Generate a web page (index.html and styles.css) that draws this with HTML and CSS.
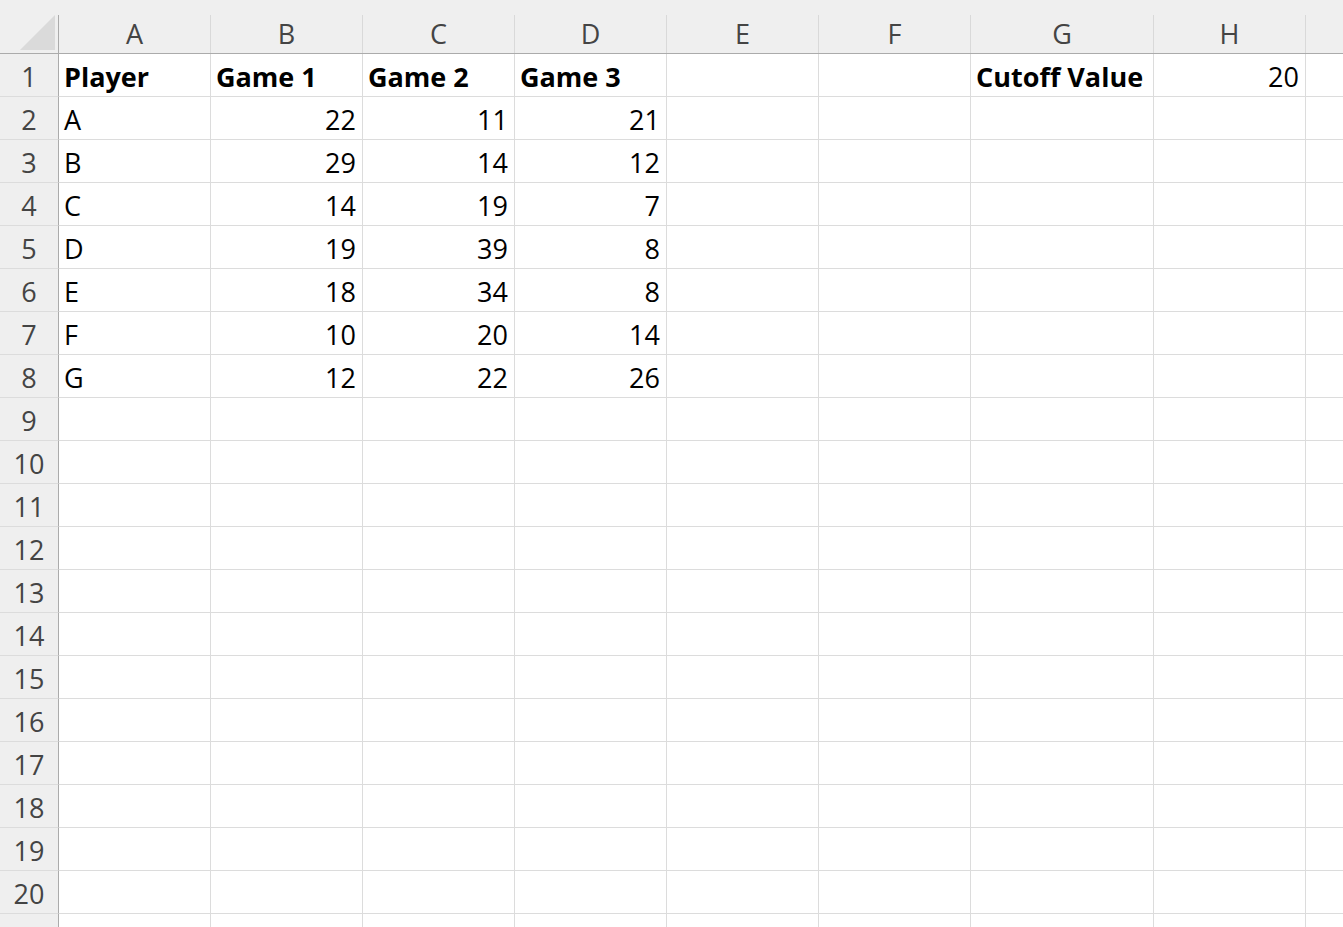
FILE: index.html
```html
<!DOCTYPE html>
<html>
<head>
<meta charset="utf-8">
<link rel="stylesheet" href="styles.css">
</head>
<body>
<div class="sheet">
  <div class="row head">
    <div class="corner"><span class="tri"></span></div>
    <div class="ch">A</div><div class="ch">B</div><div class="ch">C</div><div class="ch">D</div><div class="ch">E</div><div class="ch">F</div><div class="ch">G</div><div class="ch">H</div><div class="ch last"></div>
  </div>
  <div class="row"><div class="rh">1</div><div class="c b">Player</div><div class="c b">Game 1</div><div class="c b">Game 2</div><div class="c b">Game 3</div><div class="c"></div><div class="c"></div><div class="c b">Cutoff Value</div><div class="c n">20</div><div class="c"></div></div>
  <div class="row"><div class="rh">2</div><div class="c">A</div><div class="c n">22</div><div class="c n">11</div><div class="c n">21</div><div class="c"></div><div class="c"></div><div class="c"></div><div class="c"></div><div class="c"></div></div>
  <div class="row"><div class="rh">3</div><div class="c">B</div><div class="c n">29</div><div class="c n">14</div><div class="c n">12</div><div class="c"></div><div class="c"></div><div class="c"></div><div class="c"></div><div class="c"></div></div>
  <div class="row"><div class="rh">4</div><div class="c">C</div><div class="c n">14</div><div class="c n">19</div><div class="c n">7</div><div class="c"></div><div class="c"></div><div class="c"></div><div class="c"></div><div class="c"></div></div>
  <div class="row"><div class="rh">5</div><div class="c">D</div><div class="c n">19</div><div class="c n">39</div><div class="c n">8</div><div class="c"></div><div class="c"></div><div class="c"></div><div class="c"></div><div class="c"></div></div>
  <div class="row"><div class="rh">6</div><div class="c">E</div><div class="c n">18</div><div class="c n">34</div><div class="c n">8</div><div class="c"></div><div class="c"></div><div class="c"></div><div class="c"></div><div class="c"></div></div>
  <div class="row"><div class="rh">7</div><div class="c">F</div><div class="c n">10</div><div class="c n">20</div><div class="c n">14</div><div class="c"></div><div class="c"></div><div class="c"></div><div class="c"></div><div class="c"></div></div>
  <div class="row"><div class="rh">8</div><div class="c">G</div><div class="c n">12</div><div class="c n">22</div><div class="c n">26</div><div class="c"></div><div class="c"></div><div class="c"></div><div class="c"></div><div class="c"></div></div>
  <div class="row"><div class="rh">9</div><div class="c"></div><div class="c"></div><div class="c"></div><div class="c"></div><div class="c"></div><div class="c"></div><div class="c"></div><div class="c"></div><div class="c"></div></div>
  <div class="row"><div class="rh">10</div><div class="c"></div><div class="c"></div><div class="c"></div><div class="c"></div><div class="c"></div><div class="c"></div><div class="c"></div><div class="c"></div><div class="c"></div></div>
  <div class="row"><div class="rh">11</div><div class="c"></div><div class="c"></div><div class="c"></div><div class="c"></div><div class="c"></div><div class="c"></div><div class="c"></div><div class="c"></div><div class="c"></div></div>
  <div class="row"><div class="rh">12</div><div class="c"></div><div class="c"></div><div class="c"></div><div class="c"></div><div class="c"></div><div class="c"></div><div class="c"></div><div class="c"></div><div class="c"></div></div>
  <div class="row"><div class="rh">13</div><div class="c"></div><div class="c"></div><div class="c"></div><div class="c"></div><div class="c"></div><div class="c"></div><div class="c"></div><div class="c"></div><div class="c"></div></div>
  <div class="row"><div class="rh">14</div><div class="c"></div><div class="c"></div><div class="c"></div><div class="c"></div><div class="c"></div><div class="c"></div><div class="c"></div><div class="c"></div><div class="c"></div></div>
  <div class="row"><div class="rh">15</div><div class="c"></div><div class="c"></div><div class="c"></div><div class="c"></div><div class="c"></div><div class="c"></div><div class="c"></div><div class="c"></div><div class="c"></div></div>
  <div class="row"><div class="rh">16</div><div class="c"></div><div class="c"></div><div class="c"></div><div class="c"></div><div class="c"></div><div class="c"></div><div class="c"></div><div class="c"></div><div class="c"></div></div>
  <div class="row"><div class="rh">17</div><div class="c"></div><div class="c"></div><div class="c"></div><div class="c"></div><div class="c"></div><div class="c"></div><div class="c"></div><div class="c"></div><div class="c"></div></div>
  <div class="row"><div class="rh">18</div><div class="c"></div><div class="c"></div><div class="c"></div><div class="c"></div><div class="c"></div><div class="c"></div><div class="c"></div><div class="c"></div><div class="c"></div></div>
  <div class="row"><div class="rh">19</div><div class="c"></div><div class="c"></div><div class="c"></div><div class="c"></div><div class="c"></div><div class="c"></div><div class="c"></div><div class="c"></div><div class="c"></div></div>
  <div class="row"><div class="rh">20</div><div class="c"></div><div class="c"></div><div class="c"></div><div class="c"></div><div class="c"></div><div class="c"></div><div class="c"></div><div class="c"></div><div class="c"></div></div>
  <div class="row"><div class="rh">21</div><div class="c"></div><div class="c"></div><div class="c"></div><div class="c"></div><div class="c"></div><div class="c"></div><div class="c"></div><div class="c"></div><div class="c"></div></div>
</div>
</body>
</html>
```
FILE: styles.css
```css
html, body {
  margin: 0;
  padding: 0;
  background: #ffffff;
  overflow: hidden;
}
.sheet {
  width: 1343px;
  height: 927px;
  overflow: hidden;
  font-family: "Open Sans", "Noto Sans", sans-serif;
  font-size: 27px;
  color: #000;
}
.row {
  display: grid;
  grid-template-columns: 59px 152px 152px 152px 152px 152px 152px 183px 152px 200px;
  height: 43px;
}
.row.head {
  height: 54px;
  background: #efefef;
  box-sizing: border-box;
  padding-top: 15px;
  border-bottom: 1px solid #ababab;
}
.corner {
  position: relative;
  border-right: 1px solid #ababab;
}
.tri {
  position: absolute;
  left: 20px;
  top: 0;
  width: 35px;
  height: 35px;
  background: #dadada;
  clip-path: polygon(100% 0, 100% 100%, 0 100%);
}
.ch {
  border-right: 1px solid #d9d9d9;
  color: #444;
  font-size: 27px;
  line-height: 38px;
  text-align: center;
}
.ch.last { border-right: none; }
.rh {
  background: #efefef;
  border-right: 1px solid #ababab;
  border-bottom: 1px solid #dcdcdc;
  color: #444;
  text-align: center;
  padding-top: 3px;
  line-height: 39px;
}
.c {
  border-right: 1px solid #dcdcdc;
  border-bottom: 1px solid #dcdcdc;
  padding: 4px 6px 0 5px;
  line-height: 38px;
  white-space: nowrap;
  overflow: hidden;
}
.c.b { font-weight: 700; }
.c.n { text-align: right; }
```
